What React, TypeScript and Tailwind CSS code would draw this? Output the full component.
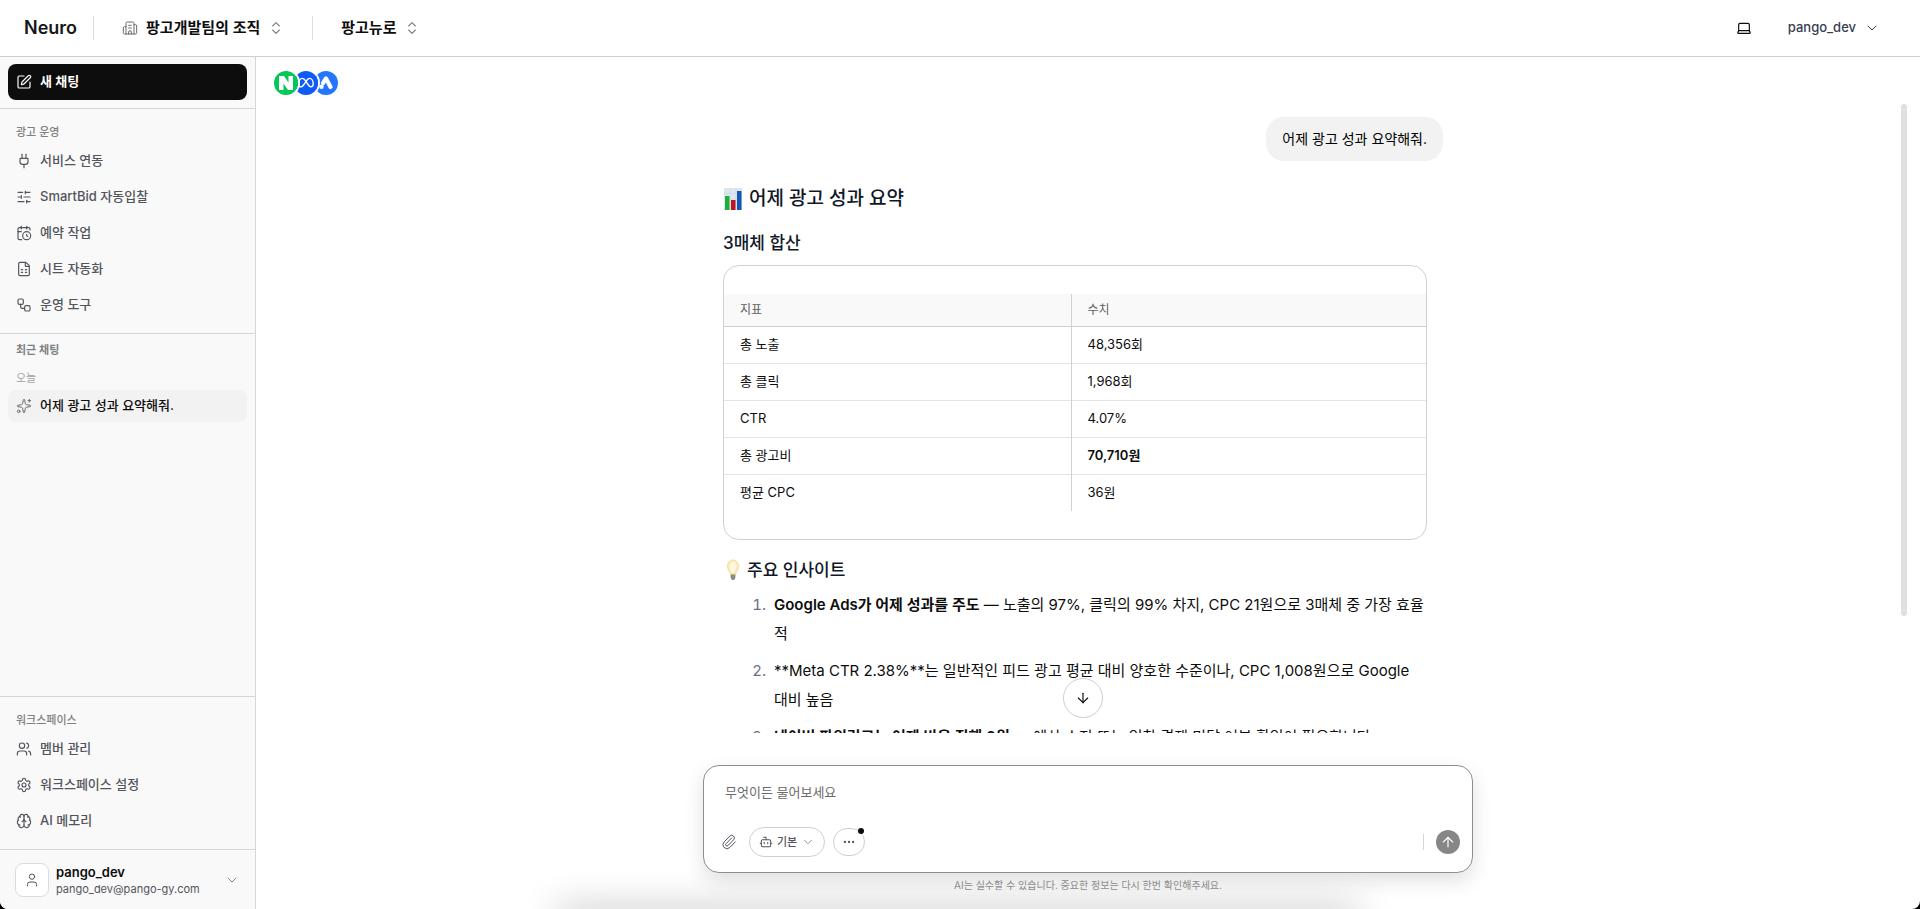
import {
  ArrowDown,
  ArrowUp,
  Bot,
  Brain,
  Building2,
  CalendarClock,
  ChevronDown,
  ChevronsUpDown,
  Ellipsis,
  FileSpreadsheet,
  Laptop,
  Paperclip,
  Plug,
  Settings,
  SlidersHorizontal,
  Sparkles,
  SquarePen,
  User,
  Users,
  Workflow,
} from "lucide-react";

const adMenu = [
  { icon: Plug, label: "서비스 연동" },
  { icon: SlidersHorizontal, label: "SmartBid 자동입찰" },
  { icon: CalendarClock, label: "예약 작업" },
  { icon: FileSpreadsheet, label: "시트 자동화" },
  { icon: Workflow, label: "운영 도구" },
];

const workspaceMenu = [
  { icon: Users, label: "멤버 관리" },
  { icon: Settings, label: "워크스페이스 설정" },
  { icon: Brain, label: "AI 메모리" },
];

const rows = [
  { name: "총 노출", value: "48,356회" },
  { name: "총 클릭", value: "1,968회" },
  { name: "CTR", value: "4.07%" },
  { name: "총 광고비", value: "70,710원", bold: true },
  { name: "평균 CPC", value: "36원" },
];

const MenuItem = ({ icon: Icon, label }: any) => (
  <a
    href="#"
    className="flex h-9 items-center gap-2 rounded-lg px-2 text-[13px] font-medium text-[#52555c]"
  >
    <Icon size={16} strokeWidth={1.75} />
    <span>{label}</span>
  </a>
);

const Header = () => (
  <header className="flex h-[57px] shrink-0 items-center border-b border-[#cfcfcf] bg-white pl-6 pr-10">
    <span className="text-lg font-semibold text-[#171717]">Neuro</span>
    <div className="ml-4 h-6 w-px bg-[#dcdcdc]" />
    <button className="ml-7 flex items-center gap-2 text-[15px] font-semibold text-[#0d0d0d]">
      <Building2 size={16} strokeWidth={1.5} className="text-[#6b6b6b]" />
      <span>팡고개발팀의 조직</span>
      <ChevronsUpDown size={16} strokeWidth={1.75} className="text-[#808080]" />
    </button>
    <div className="ml-7 h-6 w-px bg-[#dcdcdc]" />
    <button className="ml-7 flex items-center gap-2 text-[15px] font-semibold text-[#0d0d0d]">
      <span>팡고뉴로</span>
      <ChevronsUpDown size={16} strokeWidth={1.75} className="text-[#808080]" />
    </button>
    <button aria-label="테마" className="ml-auto text-[#0d0d0d]">
      <Laptop size={16} strokeWidth={1.75} />
    </button>
    <button className="ml-9 flex items-center gap-2 text-[13px] font-medium text-[#344054]">
      <span>pango_dev</span>
      <ChevronDown size={16} strokeWidth={1.5} />
    </button>
  </header>
);

const Sidebar = () => (
  <aside className="flex w-64 shrink-0 flex-col border-r border-[#d6d6d6] bg-[#f9f9f9]">
    <div className="border-b border-[#d6d6d6] px-2 pb-2 pt-[7px]">
      <button className="flex h-9 w-full items-center gap-2 rounded-lg bg-[#0d0d0d] px-2 text-[13px] font-semibold text-white">
        <SquarePen size={16} strokeWidth={1.75} />
        <span>새 채팅</span>
      </button>
    </div>
    <nav className="border-b border-[#d6d6d6] px-2 pb-[10px] pt-[15px]">
      <h2 className="px-2 pb-[3px] text-[11px] font-medium leading-4 text-[#808080]">광고 운영</h2>
      {adMenu.map((item) => (
        <MenuItem key={item.label} {...item} />
      ))}
    </nav>
    <section className="flex-1 px-2 pt-2">
      <h2 className="px-2 text-[11px] font-semibold leading-4 text-[#808080]">최근 채팅</h2>
      <p className="px-2 pb-1 pt-3 text-[11px] leading-4 text-[#a3a3a3]">오늘</p>
      <a
        href="#"
        className="flex h-8 items-center gap-2 rounded-lg bg-[#f2f2f2] px-2 text-[13px] font-medium text-[#0d0d0d]"
      >
        <Sparkles size={16} strokeWidth={1.5} className="text-[#6b6b6b]" />
        <span>어제 광고 성과 요약해줘.</span>
      </a>
    </section>
    <nav className="border-y border-[#d6d6d6] px-2 pb-[10px] pt-[15px]">
      <h2 className="px-2 pb-[3px] text-[11px] font-medium leading-4 text-[#808080]">워크스페이스</h2>
      {workspaceMenu.map((item) => (
        <MenuItem key={item.label} {...item} />
      ))}
    </nav>
    <button className="flex h-[59px] items-center gap-[7px] px-[15px] text-left">
      <span className="flex h-[34px] w-[34px] items-center justify-center rounded-lg border border-[#dcdcdc] bg-white text-[#52555c]">
        <User size={16} strokeWidth={1.5} />
      </span>
      <span className="flex-1">
        <span className="block text-[13px] font-semibold leading-[18px] text-[#0d0d0d]">pango_dev</span>
        <span className="block text-[11px] leading-4 text-[#52555c]">pango_dev@pango-gy.com</span>
      </span>
      <ChevronDown size={16} strokeWidth={1.5} className="text-[#8a8a8a]" />
    </button>
  </aside>
);

const MediaBadges = () => (
  <div className="flex -space-x-1 px-[18px] pb-[9px] pt-[14px]">
    <svg viewBox="0 0 24 24" className="relative z-20 size-6 rounded-full shadow-sm ring-2 ring-white">
      <rect width="24" height="24" fill="#03c75a" />
      <path d="M5 5h5l4.500 6.500V5H19v14h-5l-4.500-6.500V19H5z" fill="#fff" />
    </svg>
    <svg viewBox="0 0 24 24" className="relative z-10 size-6 rounded-full shadow-sm ring-2 ring-white">
      <rect width="24" height="24" fill="#0f5bf5" />
      <path
        d="M12 10.400C10.600 8.200 9.400 7.400 8.200 7.400c-2 0-3.400 2.600-3.400 5.300 0 2 .9 3.200 2.300 3.200 1.600 0 2.600-1.500 4.900-5.500 1.200-2.100 2.400-3 3.700-3 2 0 3.500 2.600 3.500 5.400 0 2-.9 3.100-2.300 3.100-1.700 0-2.600-1.500-4.900-5.500z"
        fill="none"
        stroke="#fff"
        strokeWidth="1.400"
      />
    </svg>
    <svg viewBox="0 0 24 24" className="size-6 rounded-full shadow-sm ring-2 ring-white">
      <rect width="24" height="24" fill="#2476ff" />
      <path d="M12 7.600l4.500 8.400M11.800 7.600l-2.800 4.600" stroke="#fff" strokeWidth="4.200" strokeLinecap="round" />
      <circle cx="7.500" cy="15.700" r="2.200" fill="#fff" />
    </svg>
  </div>
);

const ChartEmoji = () => (
  <svg viewBox="0 0 20 22" className="h-[22px] w-5">
    <rect x="1" width="18" height="22" fill="#dbe6ef" />
    <path d="M1 5.500h18M1 11h18M1 16.500h18M7 0v22M13 0v22" stroke="#c5d3df" strokeWidth=".5" />
    <rect x="2" y="8" width="4.500" height="14" fill="#1fae3a" />
    <rect x="8" y="12" width="4.500" height="10" fill="#c0141f" />
    <rect x="14" y="3" width="4.500" height="19" fill="#1257b5" />
  </svg>
);

const BulbEmoji = () => (
  <svg viewBox="0 0 20 22" className="h-[22px] w-5">
    <path
      d="M10 1C6.500 1 4.500 4 4.500 7.300c0 3.600 2.300 5.200 3 8.200h5c.7-3 3-4.600 3-8.200C15.500 4 13.500 1 10 1z"
      fill="#fdebb8"
      stroke="#f2d48c"
      strokeWidth=".8"
    />
    <path d="M10 3c-2 0-3.200 2-3.200 4.200 0 2 1.200 3.800 2.200 6h2c1-2.200 2.200-4 2.200-6C13.200 5 12 3 10 3z" fill="#fff8e0" />
    <path d="M7.600 15.500h4.800v3.200L11.200 21H8.800l-1.200-2.300z" fill="#8b8b86" />
  </svg>
);

const Answer = () => (
  <article className="mt-6 pr-4 text-[#0d0d0d]">
    <h1 className="flex items-center gap-[6px] text-[19px] font-medium leading-7 text-[#101828]">
      <ChartEmoji />
      어제 광고 성과 요약
    </h1>
    <h2 className="mt-4 text-[17px] font-medium leading-7 text-[#101828]">3매체 합산</h2>
    <div className="mt-2 rounded-2xl border border-[#cfd1d4] py-7">
      <table className="w-full text-left text-[13px]">
        <thead>
          <tr className="h-8 border-b border-[#cbd0d6] bg-[#f9f9f9] text-xs text-[#5f5f5f]">
            <th className="w-[347px] border-r border-[#cfd1d4] px-4 font-normal">지표</th>
            <th className="px-4 font-normal">수치</th>
          </tr>
        </thead>
        <tbody>
          {rows.map((row) => (
            <tr key={row.name} className="h-[37px] border-b border-[#e2e4e8] last:border-b-0">
              <td className="border-r border-[#cfd1d4] px-4">{row.name}</td>
              <td className="px-4">{row.bold ? <strong className="font-semibold">{row.value}</strong> : row.value}</td>
            </tr>
          ))}
        </tbody>
      </table>
    </div>
    <h2 className="mt-4 flex items-center gap-1 text-[17px] font-medium leading-7 text-[#101828]">
      <BulbEmoji />
      주요 인사이트
    </h2>
    <ol className="mt-[6px] list-decimal space-y-2 pl-[47px] text-[15px] leading-[29px] marker:text-[#6a7282]">
      <li className="pl-1">
        <strong className="font-semibold">Google Ads가 어제 성과를 주도</strong> — 노출의 97%, 클릭의 99% 차지, CPC 21원으로 3매체 중 가장
        효율적
      </li>
      <li className="pl-1">
        **Meta CTR 2.38%**는 일반적인 피드 광고 평균 대비 양호한 수준이나, CPC 1,008원으로 Google 대비 높음
      </li>
      <li className="pl-1">
        <strong className="font-semibold">네이버 파워링크는 어제 비용 집행 0원</strong> — 예산 소진 또는 입찰 경쟁 미달 여부 확인이
        필요합니다
      </li>
    </ol>
  </article>
);

const Composer = () => (
  <form className="flex h-[108px] flex-col rounded-2xl border border-[#8f8f8f] bg-white pb-[15px] pl-[17px] pr-3 pt-4 shadow-[0_8px_20px_rgba(0,0,0,0.12)]">
    <textarea
      aria-label="메시지"
      rows={1}
      placeholder="무엇이든 물어보세요"
      className="resize-none px-1 text-[13px] leading-5 outline-none placeholder:text-[#6b6b6b]"
    />
    <div className="mt-auto flex items-center">
      <button type="button" aria-label="파일 첨부" className="text-[#52555c]">
        <Paperclip size={16} strokeWidth={1.5} />
      </button>
      <button
        type="button"
        className="ml-3 flex h-[30px] items-center gap-1 rounded-full border border-[#cfcfcf] px-[9px] text-[11px] font-medium text-[#52555c]"
      >
        <Bot size={14} strokeWidth={1.75} />
        <span>기본</span>
        <ChevronDown size={14} strokeWidth={1.5} className="text-[#8a8a8a]" />
      </button>
      <button
        type="button"
        aria-label="더보기"
        className="relative ml-2 flex h-7 w-8 items-center justify-center rounded-full border border-[#cfcfcf] text-[#52555c]"
      >
        <Ellipsis size={14} />
        <span className="absolute -top-px right-0 size-[6px] rounded-full bg-[#0d0d0d]" />
      </button>
      <div className="ml-auto h-4 w-px bg-[#d6d6d6]" />
      <button
        type="button"
        aria-label="보내기"
        className="ml-3 flex size-6 items-center justify-center rounded-full bg-[#868686] text-white"
      >
        <ArrowUp size={16} strokeWidth={1.75} />
      </button>
    </div>
  </form>
);

export default function App() {
  return (
    <div className="h-screen bg-black font-['Inter','Noto_Sans_CJK_KR',sans-serif]">
      <div className="flex h-full flex-col overflow-hidden rounded-b-lg bg-white">
        <Header />
        <div className="flex min-h-0 flex-1">
          <Sidebar />
          <main className="relative flex min-w-0 flex-1 flex-col overflow-hidden">
            <MediaBadges />
            <div className="relative mr-[10px] min-h-0 flex-1">
              <div className="h-full overflow-hidden pt-[13px]">
                <div className="mx-auto w-full max-w-[720px]">
                  <div className="ml-auto w-fit rounded-[18px] bg-[#f2f2f2] px-4 py-2 text-sm leading-7">
                    어제 광고 성과 요약해줘.
                  </div>
                  <Answer />
                </div>
              </div>
              <div className="absolute right-[3px] top-0 h-[512px] w-[6px] rounded-full bg-[#dfdfe4]" />
              <button
                aria-label="맨 아래로"
                className="absolute bottom-[15px] left-1/2 flex size-10 -translate-x-1/2 items-center justify-center rounded-full border border-[#cfcfcf] bg-white text-[#0d0d0d]"
              >
                <ArrowDown size={16} strokeWidth={1.75} />
              </button>
            </div>
            <div className="mx-auto w-full max-w-[770px] pt-8">
              <Composer />
              <p className="h-9 pt-1 text-center text-[10px] leading-4 text-[#8f8f8f]">
                AI는 실수할 수 있습니다. 중요한 정보는 다시 한번 확인해주세요.
              </p>
            </div>
            <div className="absolute -bottom-4 left-[300px] right-[560px] h-4 rounded-full shadow-[0_0_36px_rgba(0,0,0,0.3)]" />
          </main>
        </div>
      </div>
    </div>
  );
}
